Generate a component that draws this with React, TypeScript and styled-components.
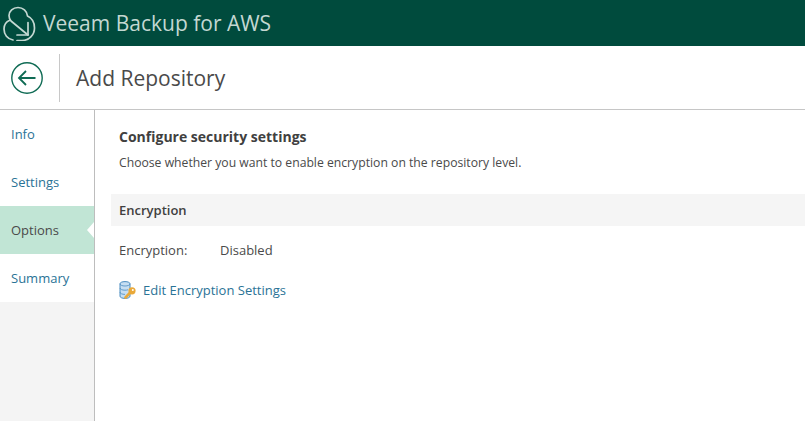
import { createGlobalStyle, styled } from "styled-components";

const GlobalStyle = createGlobalStyle`
  html, body { margin: 0; padding: 0; background: #fff; }
  body { font-family: "Open Sans", "Liberation Sans", sans-serif; overflow: hidden; }
`;

const Page = styled.div`
  width: 805px;
  height: 421px;
  display: flex;
  flex-direction: column;
  overflow: hidden;
`;

const TopBar = styled.header`
  height: 46px;
  background: #004b3d;
  display: flex;
  align-items: center;
  padding-left: 3px;
  gap: 6px;
  color: #c4d8d2;
  font-size: 21px;
  flex: none;
`;

const TitleBar = styled.div`
  height: 63px;
  border-bottom: 1px solid #c6c6c6;
  display: flex;
  align-items: center;
  flex: none;
`;

const BackCell = styled.div`
  width: 60px;
  height: 48px;
  border-right: 1px solid #c8c8c8;
  display: flex;
  align-items: center;
  padding-left: 11px;
  box-sizing: border-box;
  margin-top: 1px;
`;

const PageTitle = styled.h1`
  margin: 0 0 0 16px;
  font-size: 21px;
  font-weight: 400;
  color: #4a4a4a;
`;

const Body = styled.div`
  flex: 1;
  display: flex;
  min-height: 0;
`;

const Sidebar = styled.nav`
  width: 94px;
  background: #f4f4f4;
  border-right: 1px solid #bdbdbd;
  flex: none;
  display: flex;
  flex-direction: column;
`;

const Step = styled.div<{ $active?: boolean }>`
  height: 48px;
  flex: none;
  padding-left: 11px;
  display: flex;
  align-items: center;
  font-size: 13px;
  position: relative;
  background: ${(p) => (p.$active ? "#c1e5d5" : "#fff")};
  color: ${(p) => (p.$active ? "#4a4a4a" : "#2a7396")};

  ${(p) =>
    p.$active &&
    `&::after {
      content: "";
      position: absolute;
      right: 0;
      top: 16px;
      border-style: solid;
      border-width: 8px 7px 8px 0;
      border-color: transparent #fff transparent transparent;
    }`}
`;

const Content = styled.main`
  flex: 1;
  padding: 17px 0 0 16px;
  min-width: 0;
`;

const Intro = styled.div`
  padding-left: 8px;
`;

const Heading = styled.h2`
  margin: 0;
  font-size: 14px;
  line-height: 20px;
  font-weight: 700;
  color: #404040;
`;

const Description = styled.p`
  margin: 7px 0 0;
  font-size: 12.2px;
  line-height: 17px;
  color: #4a4a4a;
`;

const SectionHeader = styled.div`
  margin-top: 23px;
  height: 32px;
  background: #f5f5f5;
  padding-left: 8px;
  display: flex;
  align-items: center;
  font-size: 13px;
  font-weight: 600;
  color: #404040;
`;

const InfoRow = styled.div`
  margin-top: 16px;
  padding-left: 8px;
  display: flex;
  font-size: 13px;
  line-height: 17px;
  color: #4a4a4a;
`;

const InfoLabel = styled.span`
  width: 101px;
`;

const ActionLink = styled.a`
  margin: 22px 0 0 8px;
  display: flex;
  align-items: center;
  gap: 7px;
  font-size: 13px;
  line-height: 17px;
  color: #2a7396;
  text-decoration: none;
`;

const CloudLogo = () => (
  <svg width="34" height="36" viewBox="3 5 34 36" fill="none" stroke="#c4d8d2" strokeWidth="1.7" strokeLinecap="round" strokeLinejoin="round">
    <path d="M13 40C7.500 39 4 34.500 4 29c0-4 2.200-7.300 5.800-8.800" />
    <path d="M28 35L11 21c-1.300-1.600-2-3.400-2-5.500C9 11 13 7.500 18 7.500s9 3.500 9.500 8.500c4.300 2 7 6.500 7 12 0 7-5.500 12.500-12.500 12.500h-5" />
    <path d="M28 22.500V35H17" />
  </svg>
);

const BackIcon = () => (
  <svg width="32" height="32" viewBox="0 0 32 32" fill="none" stroke="#0f6b54" strokeWidth="1.4">
    <circle cx="16" cy="16" r="15.200" />
    <path d="M24.500 16H8M15 9l-7 7 7 7" strokeWidth="1.800" />
  </svg>
);

const RepoKeyIcon = () => (
  <svg width="17" height="18" viewBox="0 0 17 18" fill="none">
    <path d="M1 2.800C1 1.500 3.200.600 6 .600s5 .9 5 2.200v12.400c0 1.300-2.200 2.200-5 2.200s-5-.9-5-2.200z" fill="#c6def2" stroke="#4a8cc0" strokeWidth="1" />
    <path d="M1 2.800c0 1.300 2.200 2.200 5 2.200s5-.9 5-2.200M1 7c0 1.300 2.200 2.200 5 2.200 1 0 2-.1 3-.4M1 11.200c0 1.300 2.200 2.200 5 2.200" stroke="#4a8cc0" strokeWidth="0.800" />
    <circle cx="13" cy="9.800" r="3.600" fill="#e9a93a" />
    <path d="M10.800 12L6.500 16.500" stroke="#e9a93a" strokeWidth="2.600" strokeLinecap="round" />
    <circle cx="13.800" cy="9" r="1" fill="#fff" />
  </svg>
);

export default function App() {
  return (
    <>
      <GlobalStyle />
      <Page>
        <TopBar>
          <CloudLogo />
          Veeam Backup for AWS
        </TopBar>
        <TitleBar>
          <BackCell>
            <BackIcon />
          </BackCell>
          <PageTitle>Add Repository</PageTitle>
        </TitleBar>
        <Body>
          <Sidebar>
            <Step>Info</Step>
            <Step>Settings</Step>
            <Step $active>Options</Step>
            <Step>Summary</Step>
          </Sidebar>
          <Content>
            <Intro>
              <Heading>Configure security settings</Heading>
              <Description>Choose whether you want to enable encryption on the repository level.</Description>
            </Intro>
            <SectionHeader>Encryption</SectionHeader>
            <InfoRow>
              <InfoLabel>Encryption:</InfoLabel>
              <span>Disabled</span>
            </InfoRow>
            <ActionLink href="#">
              <RepoKeyIcon />
              Edit Encryption Settings
            </ActionLink>
          </Content>
        </Body>
      </Page>
    </>
  );
}
